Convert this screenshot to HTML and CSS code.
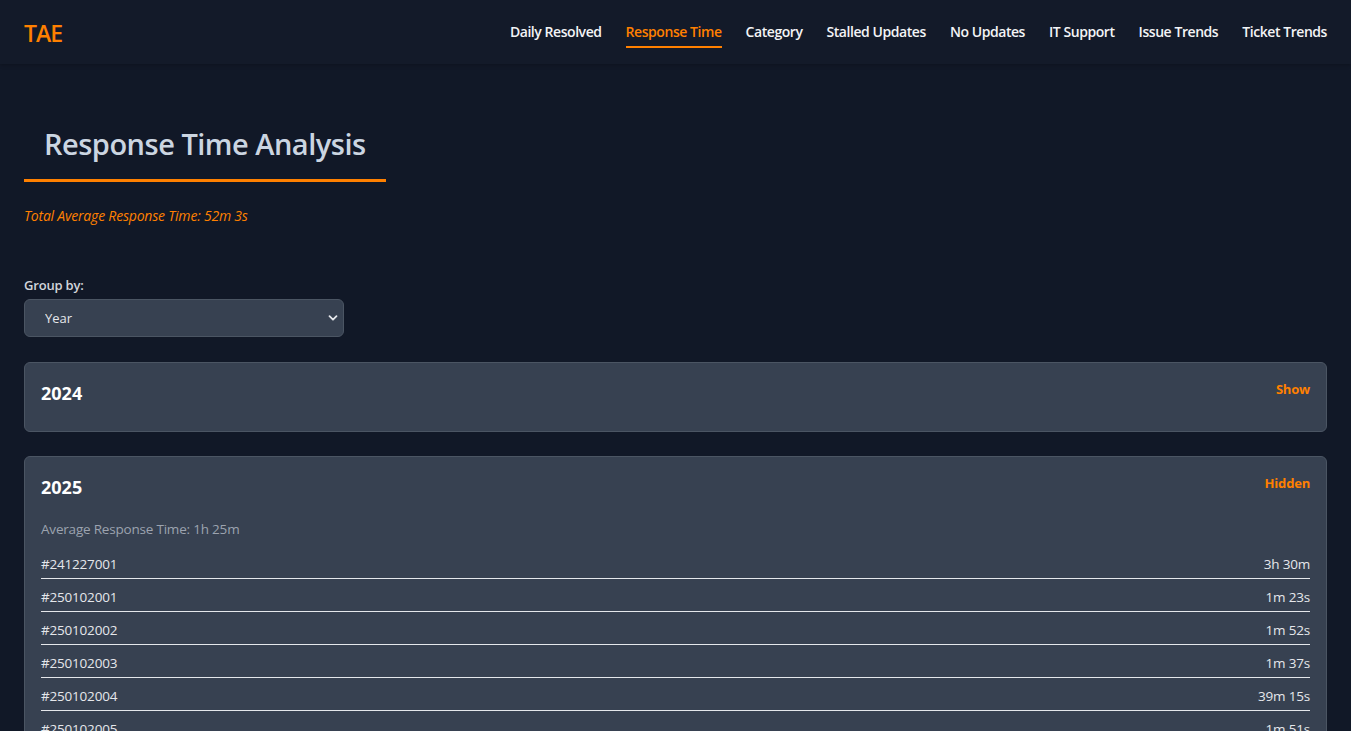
FILE: index.html
```html
<!DOCTYPE html>
<html lang="en">
<head>
<meta charset="utf-8">
<title>TAE - Response Time</title>
<link rel="stylesheet" href="styles.css">
</head>
<body>
<header class="topbar">
  <div class="logo">TAE</div>
  <nav class="nav">
    <a class="nav-link">Daily Resolved</a>
    <a class="nav-link active">Response Time</a>
    <a class="nav-link">Category</a>
    <a class="nav-link">Stalled Updates</a>
    <a class="nav-link">No Updates</a>
    <a class="nav-link">IT Support</a>
    <a class="nav-link">Issue Trends</a>
    <a class="nav-link">Ticket Trends</a>
  </nav>
</header>
<main class="main">
  <h1 class="page-title">Response Time Analysis</h1>
  <p class="total-avg">Total Average Response Time: 52m 3s</p>

  <div class="group-by">
    <label class="group-label" for="grp">Group by:</label>
    <div class="select-wrap">
      <select id="grp" class="select">
        <option>Year</option>
        <option>Month</option>
        <option>Week</option>
      </select>
      <svg class="chevron" width="10" height="10" viewBox="0 0 10 10"><path d="M1.5 3.2 L5 6.7 L8.5 3.2" fill="none" stroke="#e5e7eb" stroke-width="1.8" stroke-linecap="round" stroke-linejoin="round"/></svg>
    </div>
  </div>

  <section class="card">
    <div class="card-head">
      <h3 class="card-title">2024</h3>
      <button class="toggle">Show</button>
    </div>
  </section>

  <section class="card">
    <div class="card-head">
      <h3 class="card-title">2025</h3>
      <button class="toggle">Hidden</button>
    </div>
    <p class="card-avg">Average Response Time: 1h 25m</p>
    <ul class="rows">
      <li class="row"><span>#241227001</span><span>3h 30m</span></li>
      <li class="row"><span>#250102001</span><span>1m 23s</span></li>
      <li class="row"><span>#250102002</span><span>1m 52s</span></li>
      <li class="row"><span>#250102003</span><span>1m 37s</span></li>
      <li class="row"><span>#250102004</span><span>39m 15s</span></li>
      <li class="row"><span>#250102005</span><span>1m 51s</span></li>
      <li class="row"><span>#250102006</span><span>2m 10s</span></li>
    </ul>
  </section>
</main>
</body>
</html>
```

FILE: styles.css
```css
* { box-sizing: border-box; }

html, body {
  margin: 0;
  padding: 0;
  background: #111827;
  color: #e5e7eb;
  font-family: "Open Sans", "Noto Sans", "Liberation Sans", sans-serif;
}

.topbar {
  height: 64px;
  background: #131a29;
  box-shadow: 0 1px 4px rgba(0, 0, 0, 0.25);
  display: flex;
  align-items: center;
  justify-content: space-between;
  padding: 0 24px;
}

.logo {
  color: #ff8000;
  font-size: 23px;
  font-weight: 600;
  letter-spacing: -1px;
  margin-top: 1px;
}

.nav {
  display: flex;
  gap: 24px;
  align-items: center;
}

.nav-link {
  color: #f3f4f6;
  font-size: 14px;
  font-weight: 600;
  letter-spacing: -0.44px;
  line-height: 20px;
  padding: 4px 0 4px;
  border-bottom: 2px solid transparent;
  margin-top: 2px;
  cursor: pointer;
}

.nav-link.active {
  color: #ff8000;
  border-bottom-color: #ff8000;
}

.main {
  padding: 0 24px;
}

.page-title {
  display: inline-block;
  margin: 62px 0 0;
  padding: 0 20px 17px;
  font-size: 29px;
  line-height: 36px;
  font-weight: 600;
  letter-spacing: -0.5px;
  color: #cbd5e1;
  border-bottom: 3px solid #ff8000;
}

.total-avg {
  margin: 24px 0 0;
  font-size: 14px;
  line-height: 20px;
  font-style: italic;
  color: #ff8000;
  letter-spacing: -0.2px;
}

.group-by {
  margin-top: 50px;
  display: flex;
  flex-direction: column;
  gap: 5px;
}

.group-label {
  font-size: 13px;
  line-height: 18px;
  font-weight: 600;
  color: #d1d5db;
  letter-spacing: -0.2px;
}

.select-wrap {
  position: relative;
  width: 320px;
}

.select {
  display: block;
  appearance: none;
  -webkit-appearance: none;
  width: 320px;
  height: 38px;
  background: #374151;
  border: 1px solid #4b5563;
  border-radius: 6px;
  color: #e5e7eb;
  font-family: inherit;
  font-size: 13px;
  padding: 0 20px;
  outline: none;
}

.chevron {
  position: absolute;
  right: 6px;
  top: 14px;
  pointer-events: none;
}

.card {
  background: #374151;
  border: 1px solid #4b5563;
  border-radius: 6px;
  padding: 16px;
  margin-top: 24px;
}

.group-by + .card {
  margin-top: 25px;
}

.card-head {
  display: flex;
  justify-content: space-between;
  align-items: flex-start;
}

.card-title {
  margin: 0 0 8px;
  font-size: 18px;
  line-height: 28px;
  font-weight: 700;
  color: #ffffff;
}

.toggle {
  background: none;
  border: none;
  padding: 0;
  font-family: inherit;
  font-size: 13px;
  line-height: 20px;
  font-weight: 700;
  color: #ff8000;
  letter-spacing: -0.2px;
  cursor: pointer;
}

.card-avg {
  margin: 10px 0 7px;
  font-size: 13.5px;
  line-height: 20px;
  color: #9ca3af;
  letter-spacing: -0.2px;
}

.rows {
  list-style: none;
  margin: 0;
  padding: 0;
}

.row {
  display: flex;
  justify-content: space-between;
  padding: 8px 0 4px;
  font-size: 13.5px;
  line-height: 20px;
  color: #e5e7eb;
  letter-spacing: -0.2px;
  border-bottom: 1px solid #e5e7eb;
}
```
